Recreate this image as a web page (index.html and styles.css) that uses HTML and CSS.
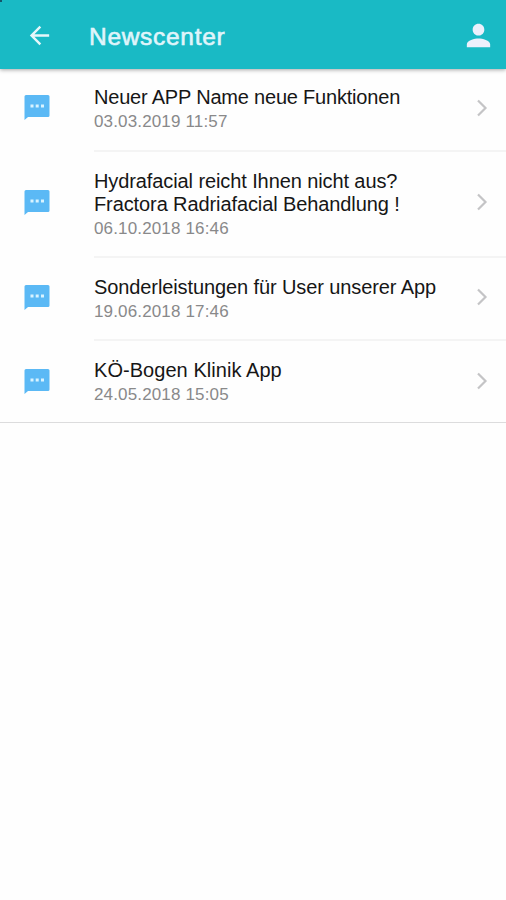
FILE: index.html
```html
<!DOCTYPE html>
<html lang="de">
<head>
    <meta charset="UTF-8">
    <meta name="viewport" content="width=device-width, initial-scale=1.0">
    <title>Newscenter</title>
    <link rel="stylesheet" href="styles.css">
</head>
<body>

    <!-- Shared icons -->
    <svg class="hidden">
        <symbol id="bubble" viewBox="0 0 26 25">
            <path fill="#5bb9f5" d="M2 0h22a1.500 1.500 0 0 1 1.500 1.500v19a1.500 1.500 0 0 1-1.500 1.500H4L.5 25V1.500A1.500 1.500 0 0 1 2 0z"/>
            <path fill="#d9f3ff" d="M6.500 9.500h3v3h-3zM11.700 9.500h3v3h-3zM17 9.500h3v3h-3z"/>
        </symbol>
        <symbol id="chevron" viewBox="0 0 12 18">
            <path fill="none" stroke="#c4c4c6" stroke-width="2.200" d="M2 1.500l7.500 7.500L2 16.500"/>
        </symbol>
    </svg>

    <header class="toolbar">
        <svg class="back" viewBox="0 0 24 24"><path d="M20 11H7.830l5.590-5.590L12 4l-8 8 8 8 1.410-1.410L7.830 13H20v-2z"/></svg>
        <h1>Newscenter</h1>
        <svg class="user" viewBox="0 0 24 24"><path d="M12 12c2.210 0 4-1.790 4-4s-1.790-4-4-4-4 1.790-4 4 1.790 4 4 4zm0 2c-2.670 0-8 1.340-8 4v2h16v-2c0-2.660-5.330-4-8-4z"/></svg>
    </header>

    <!-- News list -->
    <ul class="news">
        <li class="item">
            <svg class="bubble"><use href="#bubble"/></svg>
            <div class="content">
                <div class="text">
                    <h2>Neuer APP Name neue Funktionen</h2>
                    <p>03.03.2019 11:57</p>
                </div>
                <svg class="chevron"><use href="#chevron"/></svg>
            </div>
        </li>
        <li class="item">
            <svg class="bubble"><use href="#bubble"/></svg>
            <div class="content">
                <div class="text">
                    <h2>Hydrafacial reicht Ihnen nicht aus?<br>Fractora Radriafacial Behandlung !</h2>
                    <p>06.10.2018 16:46</p>
                </div>
                <svg class="chevron"><use href="#chevron"/></svg>
            </div>
        </li>
        <li class="item">
            <svg class="bubble"><use href="#bubble"/></svg>
            <div class="content">
                <div class="text">
                    <h2>Sonderleistungen für User unserer App</h2>
                    <p>19.06.2018 17:46</p>
                </div>
                <svg class="chevron"><use href="#chevron"/></svg>
            </div>
        </li>
        <li class="item">
            <svg class="bubble"><use href="#bubble"/></svg>
            <div class="content">
                <div class="text">
                    <h2>KÖ-Bogen Klinik App</h2>
                    <p>24.05.2018 15:05</p>
                </div>
                <svg class="chevron"><use href="#chevron"/></svg>
            </div>
        </li>
    </ul>

</body>
</html>
```
FILE: styles.css
```css
* { box-sizing: border-box; }
body { margin: 0; background: #fefefe; font-family: "Liberation Sans", Arial, sans-serif; }
h1, h2, p, ul { margin: 0; padding: 0; }
.hidden { display: none; }

.toolbar { position: relative; display: flex; align-items: center; height: 69px; padding: 2px 10px 0 25px; background: #19bac5; box-shadow: 0 1px 4px rgba(0, 0, 0, 0.35); }
/* dark speck in the corner */
.toolbar::before { content: ""; position: absolute; top: 0; left: 0; width: 2px; height: 2px; background: #14566b; }
.toolbar h1 { flex: 1; margin-left: 35px; padding-top: 2px; color: #e0f5fb; font-size: 24.5px; font-weight: normal; letter-spacing: 0.7px; -webkit-text-stroke: 0.6px #e0f5fb; }
.back { width: 29px; height: 29px; fill: #e6f7fa; }
.user { width: 35px; height: 35px; fill: #ecf0fc; }

.news { list-style: none; border-bottom: 1px solid #dcdcdd; }
.item { display: flex; align-items: center; min-height: 83px; padding-left: 24px; }
.bubble { width: 26px; height: 25px; margin: 0 44px 5px 0; }
.content { flex: 1; display: flex; align-items: center; align-self: stretch; padding-right: 18px; border-bottom: 2px solid #f4f4f4; }
.text { flex: 1; align-self: flex-start; padding: 18px 0 16px; }
.text h2 { color: #161616; font-size: 20px; font-weight: normal; line-height: 23px; letter-spacing: -0.1px; white-space: nowrap; }
.text p { color: #89898a; font-size: 17px; line-height: 23px; letter-spacing: 0.15px; padding-top: 1px; }
.chevron { width: 12px; height: 18px; margin-bottom: 4px; }

.item:first-child .text { padding-top: 17px; }
.item:first-child h2 { letter-spacing: -0.2px; }
.item:first-child .bubble { margin-bottom: 7px; }
.item:last-child { min-height: 81px; }
.item:last-child .content { border-bottom: 0; }
.item:last-child .text { padding-bottom: 15px; }
.item:last-child h2 { letter-spacing: 0.05px; }
.item:last-child .bubble, .item:last-child .chevron { margin-bottom: 1px; }
```
